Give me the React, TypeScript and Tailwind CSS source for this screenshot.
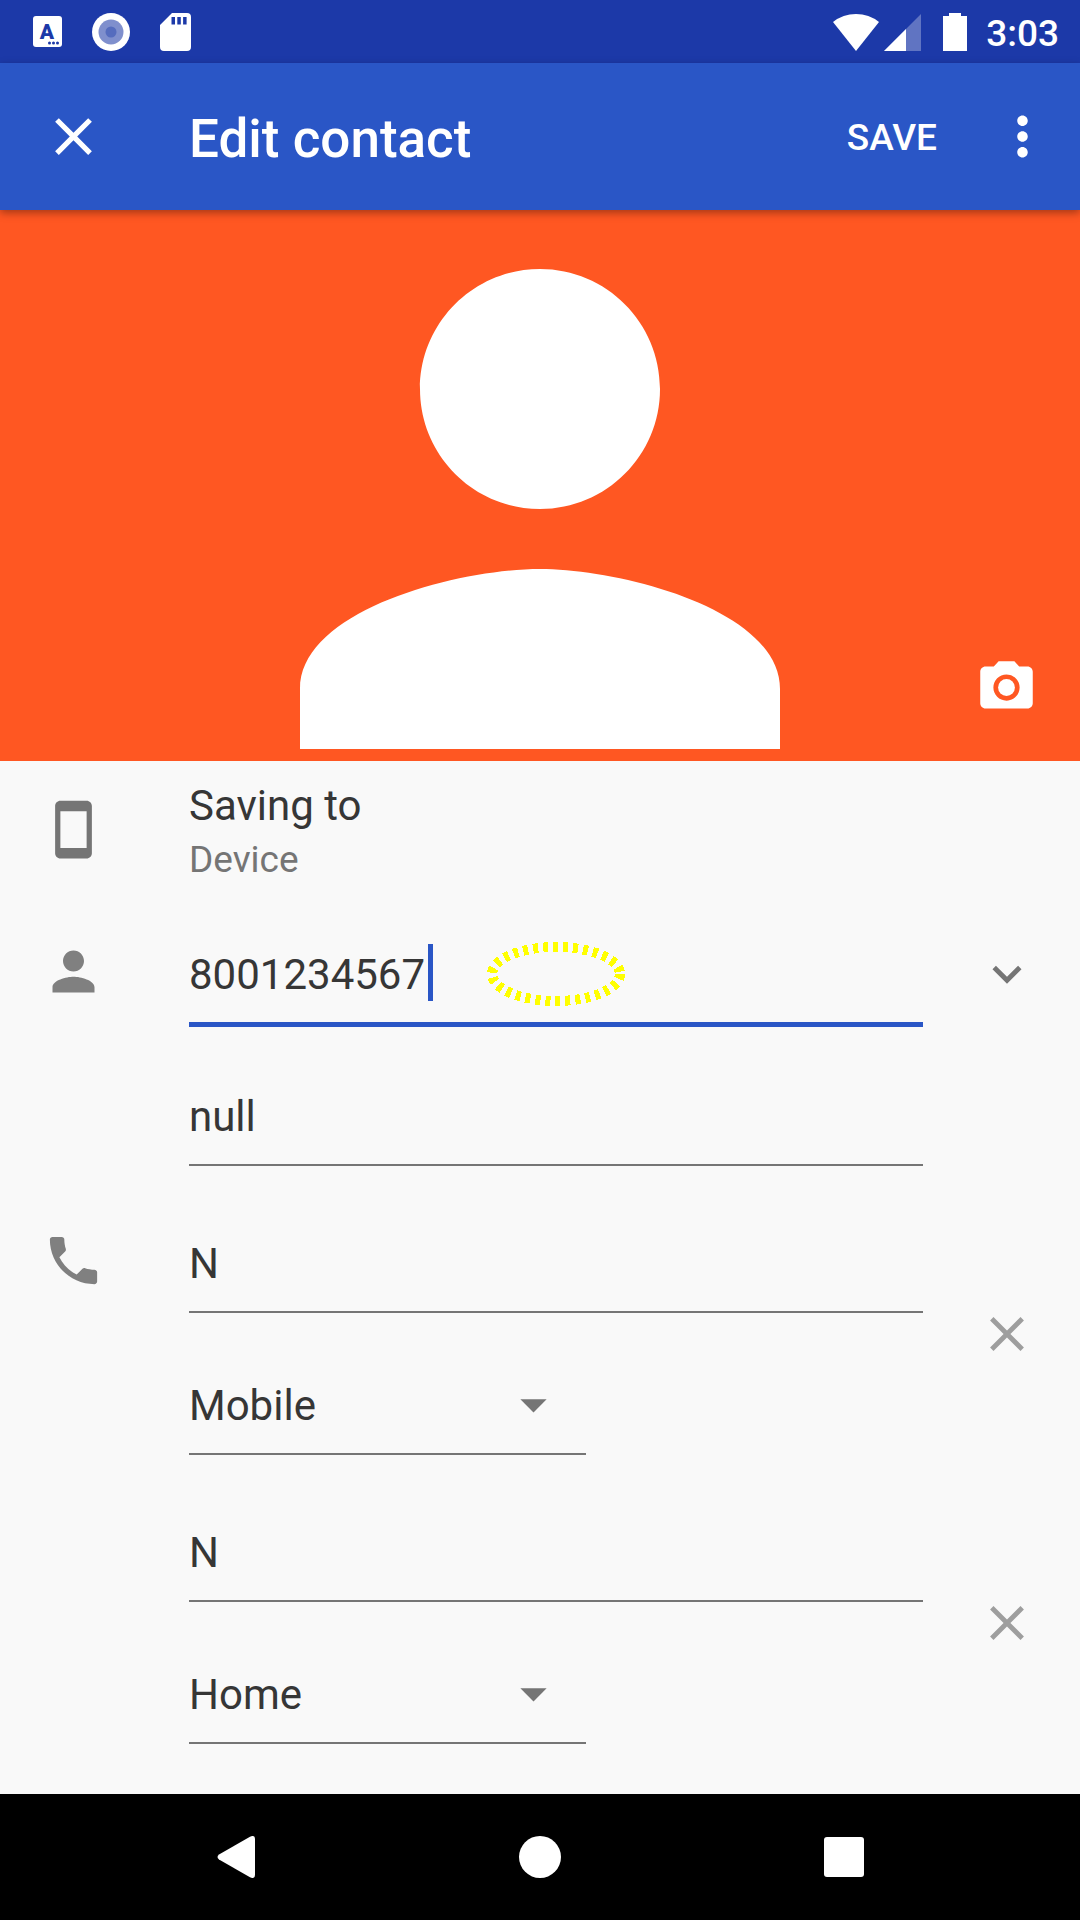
import { type ReactNode } from "react";

const PERSON =
  "M12 12c2.21 0 4-1.79 4-4s-1.79-4-4-4-4 1.79-4 4 1.79 4 4 4zm0 2c-2.67 0-8 1.34-8 4v2h16v-2c0-2.66-5.33-4-8-4z";
const CLOSE =
  "M19 6.41L17.59 5 12 10.59 6.41 5 5 6.41 10.59 12 5 17.59 6.41 19 12 13.41 17.59 19 19 17.59 13.41 12z";
const MORE =
  "M12 8c1.1 0 2-.9 2-2s-.9-2-2-2-2 .9-2 2 .9 2 2 2zm0 2c-1.1 0-2 .9-2 2s.9 2 2 2 2-.9 2-2-.9-2-2-2zm0 6c-1.1 0-2 .9-2 2s.9 2 2 2 2-.9 2-2-.9-2-2-2z";
const DEVICE =
  "M17 1H7c-1.1 0-2 .9-2 2v18c0 1.1.9 2 2 2h10c1.1 0 2-.9 2-2V3c0-1.1-.9-2-2-2zM17 19H7V5h10v14z";
const PHONE =
  "M6.62 10.79c1.44 2.83 3.76 5.14 6.59 6.59l2.2-2.2c.27-.27.67-.36 1.02-.24 1.12.37 2.33.57 3.57.57.55 0 1 .45 1 1V20c0 .55-.45 1-1 1-9.39 0-17-7.61-17-17 0-.55.45-1 1-1h3.5c.55 0 1 .45 1 1 0 1.25.2 2.45.57 3.57.11.35.03.74-.25 1.02l-2.2 2.2z";
const EXPAND = "M16.59 8.59L12 13.17 7.41 8.59 6 10l6 6 6-6z";
const CAMERA =
  "M9 2L7.17 4H4c-1.1 0-2 .9-2 2v12c0 1.1.9 2 2 2h16c1.1 0 2-.9 2-2V6c0-1.1-.9-2-2-2h-3.17L15 2H9zm3 15c-2.76 0-5-2.24-5-5s2.24-5 5-5 5 2.24 5 5-2.24 5-5 5z";

function Icon({ d, className = "size-[63px]", children }: { d: string; className?: string; children?: ReactNode }) {
  return (
    <svg viewBox="0 0 24 24" fill="currentColor" aria-hidden="true" className={className}>
      <path d={d} />
      {children}
    </svg>
  );
}

function StatusBar() {
  return (
    <div className="flex h-[63px] items-center justify-between bg-[#1c39a8] pr-[21px] pl-[33px]">
      <div className="flex items-center gap-[30px]">
        <svg viewBox="0 0 29 31" className="h-[31px] w-[29px]" aria-hidden="true">
          <rect width="29" height="31" rx="3" fill="#fff" />
          <text x="14" y="23" textAnchor="middle" fontFamily="Roboto" fontWeight="900" fontSize="21" fill="#1c39a8">
            A
          </text>
          <g fill="#1c39a8">
            <circle cx="16.5" cy="27" r="1.5" />
            <circle cx="20.5" cy="27" r="1.5" />
            <circle cx="24.5" cy="27" r="1.5" />
          </g>
        </svg>
        <svg viewBox="0 0 38 38" className="size-[38px]" aria-hidden="true">
          <circle cx="19" cy="19" r="19" fill="#fff" />
          <circle cx="19" cy="19" r="12.5" fill="#7f8fcd" />
          <circle cx="19" cy="19" r="5.5" fill="#556cbe" />
        </svg>
        <svg viewBox="0 0 31 38" className="h-[38px] w-[31px]" aria-hidden="true">
          <path
            fill="#fff"
            fillRule="evenodd"
            d="M12 0H27Q31 0 31 4V34Q31 38 27 38H4Q0 38 0 34V12ZM11.5 4V11.5H15V4ZM17.3 4V11.5H20.8V4ZM23.1 4V11.5H26.6V4Z"
          />
        </svg>
      </div>
      <div className="flex items-center text-white">
        <svg viewBox="0 0 46 38" className="h-[38px] w-[46px]" fill="currentColor" aria-hidden="true">
          <path d="M23 38L0 9Q10 1 23 1T46 9Z" />
        </svg>
        <svg viewBox="0 0 37 38" className="ml-[5px] h-[38px] w-[37px]" fill="currentColor" aria-hidden="true">
          <path d="M0 38L37 1V38Z" opacity=".3" />
          <path d="M0 38L22 16V38Z" />
        </svg>
        <svg viewBox="0 0 24 38" className="ml-[22px] h-[38px] w-[24px]" fill="currentColor" aria-hidden="true">
          <path d="M0 3H6V0H18V3H24V38H0Z" />
        </svg>
        <span className="ml-[19px] pt-[4px] text-[37px] leading-[44px] font-medium">3:03</span>
      </div>
    </div>
  );
}

function AppBar() {
  return (
    <header className="relative z-10 flex h-[147px] items-center bg-[#2a56c6] pr-[26px] text-white shadow-[0_3px_8px_rgba(0,0,0,0.35)]">
      <button type="button" aria-label="Close" className="flex w-[147px] justify-center">
        <Icon d={CLOSE} />
      </button>
      <h1 className="flex-1 pt-[4px] pl-[42px] text-[53px] leading-[60px] font-medium">Edit contact</h1>
      <button type="button" className="pt-[2px] text-[37px] leading-[44px] font-medium">
        SAVE
      </button>
      <button type="button" aria-label="More options" className="ml-[54px]">
        <Icon d={MORE} />
      </button>
    </header>
  );
}

function Photo() {
  return (
    <section className="relative flex justify-center bg-[#ff5722] pt-[59px] pb-[12px] text-white">
      <svg viewBox="4 4 16 16" fill="currentColor" className="size-[480px]" role="img" aria-label="Contact photo">
        <path d={PERSON} />
      </svg>
      <button type="button" aria-label="Change photo" className="absolute right-[42px] bottom-[42px]">
        <Icon d={CAMERA}>
          <circle cx="12" cy="12" r="3.2" />
        </Icon>
      </button>
    </section>
  );
}

/* Three columns: leading icon, fields, trailing action. */
function Row({ icon, action, children }: { icon?: ReactNode; action?: ReactNode; children: ReactNode }) {
  return (
    <div className="grid grid-cols-[147px_1fr_147px]">
      <div className="flex justify-center text-[#808080]">{icon}</div>
      <div className="min-w-0 pr-[10px] pl-[42px]">{children}</div>
      <div className="flex justify-center">{action}</div>
    </div>
  );
}

function TextField({ label, value }: { label: string; value: string }) {
  return (
    <input
      type="text"
      aria-label={label}
      defaultValue={value}
      className="block h-24 w-full border-b-2 border-[#757575] bg-transparent pb-[2px] text-[42px] outline-none"
    />
  );
}

function PhoneEntry({ icon, type }: { icon?: ReactNode; type: string }) {
  return (
    <Row
      icon={icon}
      action={
        <button type="button" aria-label={`Remove ${type} number`} className="mt-[88px] self-start text-[#9e9e9e]">
          <Icon d={CLOSE} className="size-[58px]" />
        </button>
      }
    >
      <TextField label={`${type} phone`} value="N" />
      <div className="relative mt-[46px] w-[397px] max-w-full">
        <select
          aria-label="Phone type"
          defaultValue={type}
          className="block h-24 w-full appearance-none border-b-2 border-[#757575] bg-transparent pb-[2px] text-[42px] outline-none"
        >
          <option>Mobile</option>
          <option>Home</option>
          <option>Work</option>
        </select>
        <Icon d="M7 10l5 5 5-5z" className="pointer-events-none absolute top-[14px] right-[21px] size-[63px] text-[#757575]" />
      </div>
    </Row>
  );
}

function NameField() {
  return (
    <div className="relative">
      <input
        type="text"
        aria-label="First name"
        defaultValue="8001234567"
        className="block h-[99px] w-full border-b-[5px] border-[#2a56c6] bg-transparent pb-[2px] text-[42px] outline-none"
      />
      <span className="absolute top-4 left-[239px] h-[57px] w-[5px] bg-[#2a56c6]" />
      <svg
        viewBox="0 0 138 64"
        className="pointer-events-none absolute top-[14px] left-[298px] h-[64px] w-[138px]"
        aria-hidden="true"
      >
        <ellipse
          cx="69"
          cy="32"
          rx="64"
          ry="27"
          fill="none"
          stroke="#ffff00"
          strokeWidth="10"
          strokeDasharray="5 5"
          shapeRendering="crispEdges"
        />
      </svg>
    </div>
  );
}

function NavBar() {
  return (
    <nav className="flex h-[126px] items-center bg-black px-[84px] text-white">
      <button type="button" aria-label="Back" className="flex flex-1 justify-center">
        <svg viewBox="0 0 38 42" className="h-[42px] w-[38px]" fill="currentColor" aria-hidden="true">
          <path d="M2 18.500L33 .7Q38-1.500 38 3V39Q38 43.500 33 41.300L2 23.500Q-1 21 2 18.500Z" />
        </svg>
      </button>
      <button type="button" aria-label="Home" className="flex flex-1 justify-center">
        <span className="size-[42px] rounded-full bg-white" />
      </button>
      <button type="button" aria-label="Recent apps" className="flex flex-1 justify-center">
        <span className="size-10 rounded-[3px] bg-white" />
      </button>
    </nav>
  );
}

export default function App() {
  return (
    <div className="flex min-h-screen flex-col bg-[#f9f9f9] font-[Roboto,sans-serif] text-[#363636]">
      <StatusBar />
      <AppBar />
      <Photo />
      <main className="flex-1 pt-[19px]">
        <Row icon={<Icon d={DEVICE} className="mt-[18px] size-[63px] text-[#757575]" />}>
          <p className="text-[42px] leading-[52px]">Saving to</p>
          <p className="text-[37px] leading-[56px] text-[#757575]">Device</p>
        </Row>
        <div className="mt-[40px]">
          <Row
            icon={<Icon d={PERSON} className="mt-3 size-[63px]" />}
            action={
              <button type="button" aria-label="More name fields" className="mt-[17px] self-start text-[#757575]">
                <Icon d={EXPAND} className="size-[58px]" />
              </button>
            }
          >
            <NameField />
            <div className="mt-[43px]">
              <TextField label="Last name" value="null" />
            </div>
          </Row>
        </div>
        <div className="mt-[51px] flex flex-col gap-[51px]">
          <PhoneEntry icon={<Icon d={PHONE} className="mt-3 size-[63px]" />} type="Mobile" />
          <PhoneEntry type="Home" />
        </div>
      </main>
      <NavBar />
    </div>
  );
}
